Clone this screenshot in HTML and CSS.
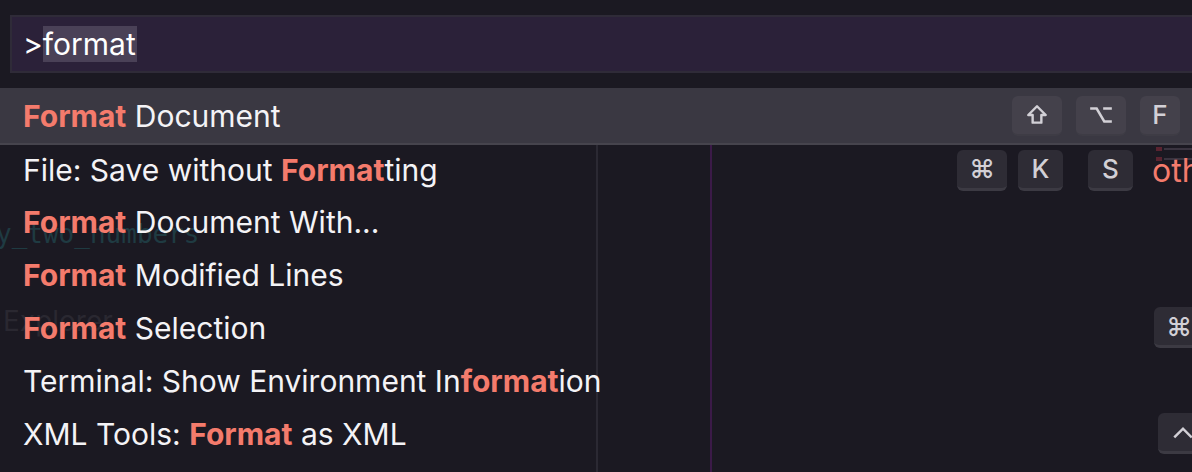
FILE: index.html
```html
<!DOCTYPE html>
<html>
<head>
<meta charset="utf-8">
<link rel="stylesheet" href="styles.css">
</head>
<body>
<div class="screen">
  <div class="ghosts">
    <div class="ghost-code">y_two_numbers</div>
    <div class="ghost-label">t Explorer</div>
    <div class="vline vline-grey"></div>
    <div class="vline vline-purple"></div>
    <div class="minimap">
      <div class="mm mm-grey mm-1"></div>
      <div class="mm mm-red mm-2"></div>
      <div class="mm mm-grey mm-3"></div>
      <div class="mm mm-red mm-4"></div>
      <div class="mm mm-grey mm-5"></div>
    </div>
  </div>
  <div class="palette">
    <div class="input-wrap">
      <div class="input">&gt;<span class="sel">format</span></div>
    </div>
    <div class="list">
      <div class="row row-active row-1">
        <span class="label"><b>Format</b> Document</span>
        <span class="keys keys-1">
          <span class="key key-wide"><svg width="24" height="24" viewBox="0 0 22 22"><path d="M11 3 L19 11 L15 11 L15 18 L7 18 L7 11 L3 11 Z" fill="none" stroke="#d2d0d6" stroke-width="2.2" stroke-linejoin="round"/></svg></span>
          <span class="key key-wide"><svg width="26" height="22" viewBox="0 0 24 20"><path d="M2 4 H8 L15 16 H22 M14 4 H22" fill="none" stroke="#d2d0d6" stroke-width="2.3"/></svg></span>
          <span class="key key-narrow">F</span>
        </span>
      </div>
      <div class="row row-2">
        <span class="label">File: Save without <b>Format</b>ting</span>
        <span class="keys keys-2">
          <span class="key key-wide">⌘</span>
          <span class="key key-mid">K</span>
          <span class="key key-mid key-gap">S</span>
          <span class="other">other</span>
        </span>
      </div>
      <div class="row row-3">
        <span class="label"><b>Format</b> Document With...</span>
      </div>
      <div class="row row-4">
        <span class="label"><b>Format</b> Modified Lines</span>
      </div>
      <div class="row row-5">
        <span class="label"><b>Format</b> Selection</span>
        <span class="keys keys-5"><span class="key key-wide">⌘</span></span>
      </div>
      <div class="row row-6">
        <span class="label">Terminal: Show Environment In<b>format</b>ion</span>
      </div>
      <div class="row row-7">
        <span class="label">XML Tools: <b>Format</b> as XML</span>
        <span class="keys keys-7"><span class="key key-wide"><svg width="24" height="16" viewBox="0 0 22 14"><path d="M3 12 L11 4 L19 12" fill="none" stroke="#d2d0d6" stroke-width="2.3"/></svg></span></span>
      </div>
    </div>
  </div>
</div>
</body>
</html>
```
FILE: styles.css
```css
* { box-sizing: border-box; }
html, body {
  margin: 0;
  padding: 0;
  width: 1192px;
  height: 472px;
  overflow: hidden;
  background: #1b1922;
}
.screen {
  position: relative;
  width: 1192px;
  height: 472px;
  overflow: hidden;
  font-family: Inter, "Noto Sans", sans-serif;
  color: #f4f3f6;
}
.ghosts {
  position: absolute;
  inset: 0;
  z-index: 0;
}
.ghost-code {
  position: absolute;
  left: -4px;
  top: 219px;
  font-family: "DejaVu Sans Mono", "Liberation Mono", monospace;
  font-size: 26px;
  color: #1f3b42;
}
.ghost-label {
  position: absolute;
  left: -14px;
  top: 304px;
  font-size: 28px;
  color: #2a2831;
}
.vline {
  position: absolute;
  top: 136px;
  bottom: 0;
  width: 2px;
}
.vline-grey { left: 596px; background: #2b2933; }
.vline-purple { left: 710px; background: #3b1a48; }
.minimap {
  position: absolute;
  left: 1150px;
  top: 138px;
  width: 42px;
  height: 30px;
}
.mm { position: absolute; height: 2px; }
.mm-grey { background: #3a3440; }
.mm-red { background: #5a2330; }
.mm-1 { left: 6px; top: 1px; width: 36px; }
.mm-2 { left: 6px; top: 9px; width: 6px; height: 4px; }
.mm-3 { left: 14px; top: 10px; width: 28px; }
.mm-4 { left: 6px; top: 19px; width: 6px; height: 4px; }
.mm-5 { left: 14px; top: 20px; width: 28px; }

.palette {
  position: relative;
  z-index: 1;
  padding-top: 15px;
}
.input-wrap {
  padding-left: 10px;
}
.input {
  height: 58px;
  width: 1200px;
  background: #2b2139;
  border: 2px solid #2f2b38;
  border-right: none;
  display: flex;
  align-items: center;
  padding-left: 11px;
  font-size: 30px;
  color: #ffffff;
  line-height: 36px;
}
.sel {
  background: #4a4157;
  padding-right: 1px;
}
.list {
  margin-top: 15px;
  width: 1260px;
}
.row {
  display: flex;
  align-items: center;
  padding-left: 23px;
  font-size: 30px;
  height: 53px;
  white-space: nowrap;
}
.row b {
  color: #f47b6c;
  font-weight: 700;
}
.row-active {
  height: 57px;
  background: #3a3842;
  border-bottom: 2px solid #46444d;
}
.row-2 { height: 50px; }
.keys {
  display: flex;
  align-items: center;
  margin-left: auto;
}
.key {
  display: flex;
  align-items: center;
  justify-content: center;
  height: 41px;
  border-radius: 6px;
  background: #2e2c35;
  border-bottom: 3px solid #3c3a43;
  color: #d2d0d6;
  font-size: 26px;
  font-weight: 500;
}
.row-active .key {
  background: #44414b;
  border-bottom: 2px solid #3e3c45;
  height: 40px;
}
.key-wide { width: 50px; }
.key-mid { width: 45px; }
.key-narrow { width: 40px; }
.keys-1 { gap: 14px; margin-right: 80px; }
.keys-2 { gap: 11px; margin-right: 0; }
.keys-2 .key-gap { margin-left: 14px; }
.other {
  margin-left: 8px;
  color: #f47b6c;
  font-size: 32px;
  width: 108px;
}
.keys-5 { margin-right: 56px; }
.keys-7 { margin-right: 52px; }
```
